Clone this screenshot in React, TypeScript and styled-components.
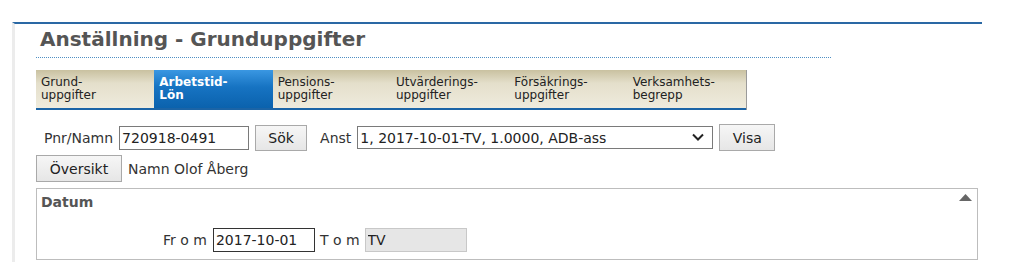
import React from "react";
import styled, { createGlobalStyle } from "styled-components";

const GlobalStyle = createGlobalStyle`
  body {
    margin: 0;
    background: #fff;
    font-family: "DejaVu Sans", Verdana, sans-serif;
    font-size: 14px;
    color: #333;
  }
`;

const Page = styled.div`
  padding-top: 22px;
`;

const Panel = styled.div`
  margin-left: 12px;
  width: 946px;
  border-top: 2px solid #2a68a4;
  border-left: 3px solid #ececec;
  box-shadow: 0 1px 0 #cfe3f3;
  padding: 3px 0 0 21px;
  min-height: 240px;
`;

const Title = styled.h1`
  margin: 0;
  width: 791px;
  padding: 0 0 6px 4px;
  font-size: 20px;
  line-height: 24px;
  font-weight: bold;
  color: #555;
  border-bottom: 1px dotted #4f8fc4;
`;

const TabBar = styled.div`
  margin-top: 12px;
  width: 710px;
  display: flex;
  border-bottom: 2px solid #1b64a6;
  box-shadow: 1px 0 0 #9a9a9a;
`;

const Tab = styled.div<{ $active?: boolean }>`
  flex: 1;
  height: 38px;
  box-sizing: border-box;
  padding: 6px 0 0 5px;
  font-size: 12px;
  line-height: 13px;
  font-weight: ${(p) => (p.$active ? "bold" : "normal")};
  color: ${(p) => (p.$active ? "#fff" : "#222")};
  background: ${(p) =>
    p.$active
      ? "linear-gradient(180deg, #3a97e2 0%, #1673c2 45%, #0b62ad 100%)"
      : "linear-gradient(180deg, #c9c1a0 0%, #e4dfcb 35%, #efebdd 100%)"};
`;

const Row = styled.div`
  display: flex;
  align-items: center;
`;

const SearchRow = styled(Row)`
  margin-top: 14px;
  padding-left: 8px;
  height: 27px;
`;

const InfoRow = styled(Row)`
  margin-top: 4px;
  height: 27px;
`;

const Label = styled.span<{ $gap?: number }>`
  margin-right: ${(p) => p.$gap ?? 6}px;
  white-space: pre;
`;

const TextInput = styled.input<{ $w: number; $disabled?: boolean }>`
  width: ${(p) => p.$w}px;
  height: 24px;
  box-sizing: border-box;
  padding: 0 2px;
  font-family: inherit;
  font-size: 14px;
  color: #222;
  border: 1px solid ${(p) => (p.$disabled ? "#c8c8c8" : "#7a7a7a")};
  background: ${(p) => (p.$disabled ? "#e6e6e6" : "#fff")};
  outline: none;
`;

const Button = styled.button<{ $w: number; $h?: number }>`
  width: ${(p) => p.$w}px;
  height: ${(p) => p.$h ?? 27}px;
  margin: 0 6px;
  padding: 0;
  font-family: inherit;
  font-size: 14px;
  color: #222;
  border: 1px solid #a9a9a9;
  border-radius: 0;
  background: linear-gradient(180deg, #f6f6f6 0%, #e6e6e6 100%);
`;

const SelectWrap = styled.div`
  position: relative;
  width: 356px;
  height: 23px;
`;

const Select = styled.select`
  appearance: none;
  width: 100%;
  height: 100%;
  box-sizing: border-box;
  padding: 0 2px;
  font-family: inherit;
  font-size: 14px;
  color: #222;
  border: 1px solid #7a7a7a;
  border-radius: 0;
  background: #fff;
  outline: none;
`;

const Chevron = styled.svg`
  position: absolute;
  right: 9px;
  top: 7px;
  pointer-events: none;
`;

const Section = styled.div`
  margin-top: 6px;
  width: 942px;
  box-sizing: border-box;
  height: 72px;
  border: 1px solid #bdbdbd;
  padding: 5px 5px 0 4px;
`;

const SectionHead = styled.div`
  display: flex;
  justify-content: space-between;
  align-items: flex-start;
  font-size: 14px;
  line-height: 17px;
  font-weight: bold;
  color: #555;
`;

const DateRow = styled(Row)`
  margin-top: 17px;
  padding-left: 122px;
`;

const App = () => {
  const tabs = [
    ["Grund-", "uppgifter"],
    ["Arbetstid-", "Lön"],
    ["Pensions-", "uppgifter"],
    ["Utvärderings-", "uppgifter"],
    ["Försäkrings-", "uppgifter"],
    ["Verksamhets-", "begrepp"],
  ];
  return (
    <>
      <GlobalStyle />
      <Page>
        <Panel>
          <Title>Anställning - Grunduppgifter</Title>
          <TabBar>
            {tabs.map(([a, b], i) => (
              <Tab key={a} $active={i === 1}>
                {a}
                <br />
                {b}
              </Tab>
            ))}
          </TabBar>

          <SearchRow>
            <Label $gap={6}>Pnr/Namn</Label>
            <TextInput $w={130} defaultValue="720918-0491" />
            <Button $w={52} $h={26}>
              Sök
            </Button>
            <Label $gap={6} style={{ marginLeft: 7 }}>
              Anst
            </Label>
            <SelectWrap>
              <Select defaultValue="1">
                <option value="1">1, 2017-10-01-TV, 1.0000, ADB-ass</option>
              </Select>
              <Chevron width="12" height="9" viewBox="0 0 12 9">
                <path d="M1 1.5 L6 6.5 L11 1.5" fill="none" stroke="#222" strokeWidth="2" />
              </Chevron>
            </SelectWrap>
            <Button $w={56}>Visa</Button>
          </SearchRow>

          <InfoRow>
            <Button $w={86} style={{ marginLeft: 0 }}>
              Översikt
            </Button>
            <Label>Namn Olof Åberg</Label>
          </InfoRow>

          <Section>
            <SectionHead>
              <span>Datum</span>
              <svg width="13" height="7" viewBox="0 0 13 7">
                <polygon points="0,7 6.5,0 13,7" fill="#666" />
              </svg>
            </SectionHead>
            <DateRow>
              <Label $gap={6}>Fr o m</Label>
              <TextInput $w={102} defaultValue="2017-10-01" style={{ borderColor: "#333" }} />
              <Label $gap={5} style={{ marginLeft: 5 }}>
                T o m
              </Label>
              <TextInput $w={102} $disabled defaultValue="TV" readOnly />
            </DateRow>
          </Section>
        </Panel>
      </Page>
    </>
  );
};

export default App;
